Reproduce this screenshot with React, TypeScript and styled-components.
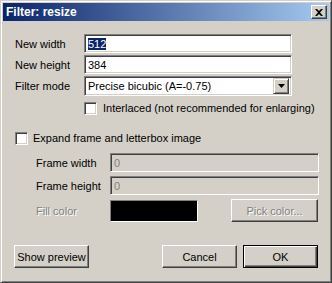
import * as React from "react";
import styled, { createGlobalStyle } from "styled-components";

const GlobalStyle = createGlobalStyle`
  html, body {
    margin: 0;
    padding: 0;
    background: #d4d0c8;
  }
  body {
    font-family: "Liberation Sans", Arial, sans-serif;
    font-size: 11px;
    color: #000;
  }
`;

const Window = styled.div`
  width: 332px;
  height: 283px;
  box-sizing: border-box;
  background: #d4d0c8;
  border: 1px solid;
  border-color: #d4d0c8 #404040 #404040 #d4d0c8;
  box-shadow: inset 1px 1px #fff, inset -1px -1px #808080;
  padding: 2px;
  display: flex;
  flex-direction: column;
`;

const TitleBar = styled.div`
  height: 18px;
  flex-shrink: 0;
  display: flex;
  align-items: center;
  padding: 0 2px 0 3px;
  background: linear-gradient(to right, #0a246a, #a6caf0);
  color: #fff;
  font-weight: bold;
  font-size: 12px;
`;

const CloseButton = styled.div`
  margin-left: auto;
  width: 16px;
  height: 14px;
  box-sizing: border-box;
  background: #d4d0c8;
  border: 1px solid;
  border-color: #fff #404040 #404040 #fff;
  box-shadow: inset -1px -1px #808080;
  display: flex;
  align-items: center;
  justify-content: center;
`;

const Body = styled.div`
  flex: 1;
  display: flex;
  flex-direction: column;
  padding: 13px 10px 12px 12px;
`;

const TopGrid = styled.div`
  display: grid;
  grid-template-columns: 69px 208px;
  row-gap: 2px;
  align-items: center;
`;

const Label = styled.div<{ $disabled?: boolean }>`
  white-space: nowrap;
  color: ${(p) => (p.$disabled ? "#808080" : "#000")};
  text-shadow: ${(p) => (p.$disabled ? "1px 1px #fff" : "none")};
`;

const Field = styled.div<{ $disabled?: boolean; $tall?: boolean }>`
  height: ${(p) => (p.$tall ? "20px" : "19px")};
  box-sizing: border-box;
  border: 1px solid;
  border-color: #808080 #fff #fff #808080;
  box-shadow: inset 1px 1px #404040, inset -1px -1px #d4d0c8;
  background: ${(p) => (p.$disabled ? "#d4d0c8" : "#fff")};
  color: ${(p) => (p.$disabled ? "#808080" : "#000")};
  padding: 0 2px 0 3px;
  display: flex;
  align-items: center;
  white-space: nowrap;
  overflow: hidden;
`;

const Selected = styled.span`
  background: #0a246a;
  color: #fff;
`;

const DropButton = styled.div`
  margin-left: auto;
  width: 16px;
  height: 16px;
  flex-shrink: 0;
  box-sizing: border-box;
  background: #d4d0c8;
  border: 1px solid;
  border-color: #d4d0c8 #404040 #404040 #d4d0c8;
  box-shadow: inset 1px 1px #fff, inset -1px -1px #808080;
  display: flex;
  align-items: center;
  justify-content: center;
`;

const CheckRow = styled.div`
  display: flex;
  align-items: center;
  gap: 5px;
  height: 14px;
  white-space: nowrap;
`;

const CheckBox = styled.div`
  width: 13px;
  height: 13px;
  flex-shrink: 0;
  box-sizing: border-box;
  background: #fff;
  border: 1px solid;
  border-color: #808080 #fff #fff #808080;
  box-shadow: inset 1px 1px #404040, inset -1px -1px #d4d0c8;
`;

const InterlacedRow = styled(CheckRow)`
  grid-column: 2;
  margin-top: 3px;
  gap: 6px;
`;

const ExpandRow = styled(CheckRow)`
  margin-top: 16px;
`;

const FrameGrid = styled.div`
  margin-top: 8px;
  padding-left: 21px;
  display: grid;
  grid-template-columns: 74px 1fr;
  row-gap: 4px;
  align-items: center;
`;

const FillRow = styled.div`
  display: flex;
  align-items: center;
  gap: 33px;
`;

const Swatch = styled.div<{ $color: string }>`
  width: 88px;
  height: 22px;
  box-sizing: border-box;
  background: ${(p) => p.$color};
  border: 1px solid;
  border-color: #808080 #fff #fff #808080;
`;

const Button = styled.div<{ $default?: boolean; $disabled?: boolean; $width?: number }>`
  width: ${(p) => p.$width ?? 75}px;
  height: 23px;
  box-sizing: border-box;
  background: #d4d0c8;
  border: 1px solid;
  border-color: ${(p) => (p.$default ? "#000" : "#fff #404040 #404040 #fff")};
  box-shadow: ${(p) =>
    p.$default
      ? "inset 1px 1px #fff, inset -1px -1px #404040, inset -2px -2px #808080"
      : "inset -1px -1px #808080"};
  display: flex;
  align-items: center;
  justify-content: center;
  white-space: nowrap;
  color: ${(p) => (p.$disabled ? "#808080" : "#000")};
  text-shadow: ${(p) => (p.$disabled ? "1px 1px #fff" : "none")};
`;

const Footer = styled.div`
  margin-top: auto;
  margin-left: -1px;
  margin-right: 1px;
  display: flex;
  gap: 6px;
`;

const Spacer = styled.div`
  flex: 1;
`;

function CloseIcon(): JSX.Element {
  return (
    <svg width="8" height="7" viewBox="0 0 8 7">
      <path d="M0 0h2l2 2 2-2h2L5 3.5 8 7H6L4 5 2 7H0l3-3.5z" fill="#000" />
    </svg>
  );
}

function DownArrow(): JSX.Element {
  return (
    <svg width="7" height="4" viewBox="0 0 7 4">
      <path d="M0 0h7L3.5 4z" fill="#000" />
    </svg>
  );
}

export default function App(): JSX.Element {
  return (
    <>
      <GlobalStyle />
      <Window>
        <TitleBar>
          Filter: resize
          <CloseButton>
            <CloseIcon />
          </CloseButton>
        </TitleBar>
        <Body>
          <TopGrid>
            <Label>New width</Label>
            <Field>
              <Selected>512</Selected>
            </Field>
            <Label>New height</Label>
            <Field>384</Field>
            <Label>Filter mode</Label>
            <Field $tall>
              Precise bicubic (A=-0.75)
              <DropButton>
                <DownArrow />
              </DropButton>
            </Field>
            <InterlacedRow>
              <CheckBox />
              Interlaced (not recommended for enlarging)
            </InterlacedRow>
          </TopGrid>
          <ExpandRow>
            <CheckBox />
            Expand frame and letterbox image
          </ExpandRow>
          <FrameGrid>
            <Label>Frame width</Label>
            <Field $disabled>0</Field>
            <Label>Frame height</Label>
            <Field $disabled>0</Field>
            <Label $disabled>Fill color</Label>
            <FillRow>
              <Swatch $color="#000" />
              <Button $disabled $width={87}>
                Pick color...
              </Button>
            </FillRow>
          </FrameGrid>
          <Footer>
            <Button>Show preview</Button>
            <Spacer />
            <Button>Cancel</Button>
            <Button $default>OK</Button>
          </Footer>
        </Body>
      </Window>
    </>
  );
}
